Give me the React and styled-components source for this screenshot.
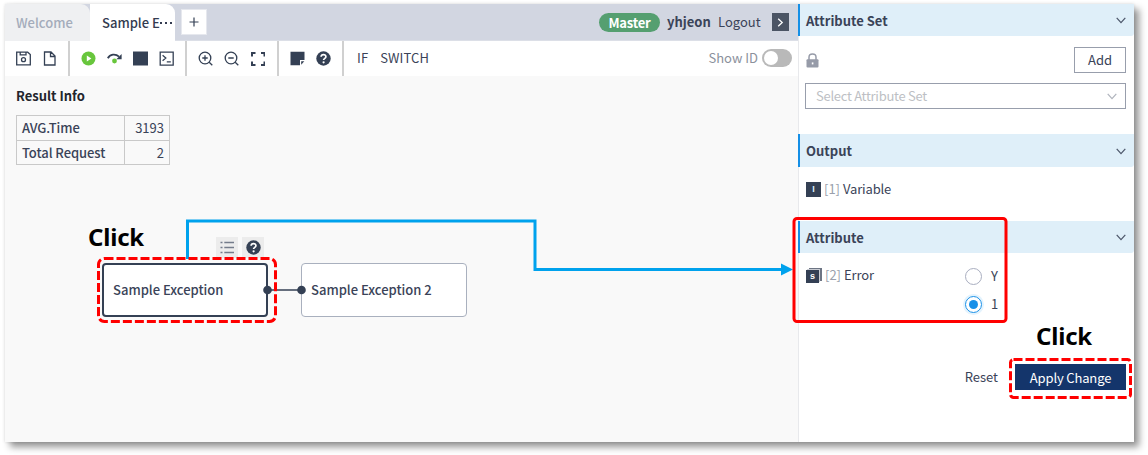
import React from "react";
import styled, { createGlobalStyle } from "styled-components";

const Global = createGlobalStyle`
  *, *::before, *::after { box-sizing: border-box; }
  body { margin: 0; background: #fff; overflow: hidden; }
`;

const Page = styled.div`
  position: relative;
  width: 1148px;
  height: 455px;
  padding: 4px 14px 13px 5px;
  font: 400 13px/20px "Noto Sans CJK KR", "Noto Sans", sans-serif;
  color: #3a4358;
`;
const Frame = styled.div`
  display: flex;
  width: 1129px;
  height: 438px;
  background: #fff;
  box-shadow: 5px 5px 7px rgba(0, 0, 0, 0.42), 0 0 3px rgba(0, 0, 0, 0.12);
`;
const Main = styled.main`
  display: flex;
  flex-direction: column;
  width: 793px;
`;
const TabBar = styled.header`
  display: flex;
  align-items: center;
  height: 37px;
  padding-right: 9px;
  background: #d2d6e1;
  border-bottom: 1px solid #dcdfe7;
`;
const Tab = styled.div`
  flex: none;
  width: 85px;
  height: 37px;
  padding-left: ${(p) => (p.$active ? 12 : 11)}px;
  line-height: 37px;
  font-weight: 500;
  white-space: nowrap;
  color: ${(p) => (p.$active ? "#333b50" : "#a4acbb")};
  background: ${(p) => (p.$active ? "#fff" : "#eff0f2")};
  border-radius: 0 9px 0 0;
  margin-bottom: -1px;
`;
const Dots = styled.span`
  display: inline-flex;
  gap: 3px;
  margin-left: 0;
  vertical-align: 4px;
  &::before, &::after, i {
    content: "";
    width: 2px;
    height: 2px;
    background: currentColor;
  }
`;
const NewTab = styled.div`
  display: grid;
  place-items: center;
  width: 26px;
  height: 26px;
  margin-left: 6px;
  background: #fff;
  border: 1px solid #e6e8ee;
`;
const Account = styled.div`
  display: flex;
  align-items: center;
  margin-left: auto;
`;
const RoleBadge = styled.span`
  width: 61px;
  height: 19px;
  margin-right: 7px;
  border-radius: 10px;
  background: #559f70;
  color: #fff;
  font-weight: 700;
  line-height: 19px;
  letter-spacing: -0.2px;
  text-align: center;
`;
const UserName = styled.span`
  width: 51px;
  font-weight: 700;
  white-space: nowrap;
`;
const Logout = styled.span`
  width: 54px;
  white-space: nowrap;
`;
const Collapse = styled.span`
  display: grid;
  place-items: center;
  width: 17px;
  height: 18px;
  background: #4b5464;
`;
const Toolbar = styled.div`
  display: flex;
  height: 35px;
  background: #fff;
`;
const ToolGroup = styled.div`
  display: flex;
  align-items: center;
  gap: 11px;
  width: ${(p) => p.$w}px;
  padding-left: 11px;
  border-right: 2px solid #d0d0d0;
`;
const Commands = styled.div`
  display: flex;
  align-items: center;
  gap: 12px;
  padding: 0 0 1px 13px;
  letter-spacing: 0.1px;
`;
const ShowId = styled.div`
  display: flex;
  align-items: center;
  gap: 4px;
  margin-left: auto;
  padding: 0 6px 1px 0;
  color: #8b919c;
`;
const Switch = styled.span`
  width: 30px;
  height: 18px;
  padding: 2px;
  border-radius: 9px;
  background: #b9b9b9;
  &::before {
    content: "";
    display: block;
    width: 14px;
    height: 14px;
    border-radius: 50%;
    background: #fff;
  }
`;
const Canvas = styled.section`
  position: relative;
  flex: 1;
  padding: 10px 11px;
  background: #f9f9f9;
`;
const Heading = styled.h2`
  margin: 0 0 9px;
  font-size: 13px;
  line-height: 20px;
  font-weight: 700;
  color: #22252c;
`;
const Results = styled.table`
  border-collapse: collapse;
  width: 154px;
  table-layout: fixed;
  td, th {
    height: 24.5px;
    padding: 1px 5px 0;
    border: 1px solid #c9c9c9;
    line-height: 22px;
  }
  th { width: 108px; text-align: left; font-weight: 500; white-space: nowrap; letter-spacing: -0.07px; }
  td { text-align: right; }
`;
const Node = styled.div`
  position: absolute;
  left: ${(p) => p.$x}px;
  top: ${(p) => p.$y}px;
  width: 166px;
  height: 54px;
  padding-left: 9px;
  border: ${(p) => (p.$selected ? "2px solid #344054" : "1px solid #a9b0be")};
  border-radius: 4px;
  background: #fff;
  font-weight: 500;
  line-height: ${(p) => (p.$selected ? 50 : 52)}px;
  white-space: nowrap;
`;
const NodeTools = styled.div`
  position: absolute;
  left: 211px;
  top: 161px;
  display: flex;
  gap: 4px;
`;
const NodeTool = styled.span`
  display: grid;
  place-items: center;
  width: 22px;
  height: 21px;
  background: #ececec;
`;
const Side = styled.aside`
  width: 336px;
  border-left: 1px solid #e8e9ec;
`;
const SectionHead = styled.div`
  display: flex;
  align-items: center;
  justify-content: space-between;
  height: ${(p) => p.$h || 32}px;
  margin-left: -1px;
  padding: 1px 8px 0 6px;
  border-left: 2px solid #158fe6;
  border-radius: 0 0 3px 0;
  background: #dfeff9;
  font-weight: 700;
`;
const SectionBody = styled.div`
  height: ${(p) => p.$h}px;
  padding: ${(p) => p.$pad || "11px 8px 0 6px"};
`;
const Row = styled.div`
  display: flex;
  align-items: ${(p) => p.$align || "center"};
  justify-content: ${(p) => p.$justify || "flex-start"};
`;
const AddButton = styled.button`
  width: 52px;
  height: 26px;
  padding: 0;
  border: 1px solid #989eac;
  background: #fff;
  color: inherit;
  font: inherit;
`;
const Select = styled.div`
  display: flex;
  align-items: center;
  justify-content: space-between;
  height: 26px;
  margin-top: 10px;
  padding: 0 8px 0 10px;
  border: 1px solid #989eac;
  color: #bdbfc4;
  letter-spacing: -0.28px;
`;
const TypeIcon = styled.span`
  display: block;
  width: 15px;
  height: 15px;
  background: #344054;
  color: #d9f0ff;
  font: 700 9px/15px "Liberation Sans", sans-serif;
  text-align: center;
`;
const StackedTypeIcon = styled(TypeIcon)`
  width: 13px;
  height: 13px;
  margin: 2px 3px 0 0;
  line-height: 12px;
  color: #fff;
  box-shadow: 1px -1px #c9ccd3, 3px -2px #6d7584;
`;
const Index = styled.span`
  margin: 0 3px 0 3px;
  color: #9a9fac;
`;
const FieldName = styled.span`
  letter-spacing: -0.15px;
`;
const Options = styled.div`
  display: grid;
  gap: 8px;
  width: 43px;
  margin: 1px 126px 0 auto;
`;
const Option = styled.label`
  display: flex;
  align-items: center;
  gap: 9px;
  height: 20px;
`;
const Radio = styled.span`
  display: grid;
  place-items: center;
  width: 17px;
  height: 17px;
  border: 1px solid ${(p) => (p.$on ? "#1890e8" : "#a9aec0")};
  border-radius: 50%;
  ${(p) => p.$on && "box-shadow: 0 0 0 2px #e4f3fd;"}
  &::before {
    content: "";
    width: 9px;
    height: 9px;
    border-radius: 50%;
    background: ${(p) => (p.$on ? "#1890e8" : "transparent")};
  }
`;
const Footer = styled.div`
  display: flex;
  align-items: center;
  justify-content: flex-end;
  gap: 17px;
  padding-right: 8px;
`;
const Apply = styled.button`
  width: 111px;
  height: 26px;
  padding: 1px 0 0;
  border: 0;
  background: #14356b;
  color: #fff;
  font: inherit;
  letter-spacing: -0.15px;
`;
const Overlay = styled.svg`
  position: absolute;
  inset: 0;
  pointer-events: none;
`;
const Callout = styled.span`
  position: absolute;
  left: ${(p) => p.$x}px;
  top: ${(p) => p.$y}px;
  color: #000;
  font: 700 24px/30px "Noto Sans", sans-serif;
  letter-spacing: -0.2px;
`;

const INK = "#344054";
const Icon = ({ w = 15, h = 15, children }) => (
  <svg width={w} height={h} viewBox={`0 0 ${w} ${h}`} fill="none" stroke={INK} strokeWidth="1.3">
    {children}
  </svg>
);
const SaveIcon = () => (
  <Icon>
    <path d="M.7 1.200h11l2.600 2.300V13.800H.7zM4.200 1.200v2.600h5.800V1.200" />
    <circle cx="7.500" cy="8.700" r="2" />
  </Icon>
);
const FileIcon = () => (
  <Icon>
    <path d="M2.500 1H9l4 4v9H2.500zM8.500 1v4.500H13" />
  </Icon>
);
const PlayIcon = () => (
  <Icon>
    <circle cx="7.500" cy="7.500" r="7" fill="#68c63c" stroke="none" />
    <path d="M5.800 4.600 10.400 7.500 5.800 10.400z" fill="#fff" stroke="none" />
  </Icon>
);
const StepIcon = () => (
  <Icon>
    <path d="M.8 7.200C3 3 8.500 2.500 12 5.600" strokeWidth="1.9" />
    <path d="M14.600 3v5.200H9.400z" fill={INK} stroke="none" />
    <circle cx="7.500" cy="10" r="2.400" fill="#68c63c" stroke="none" />
  </Icon>
);
const StopIcon = () => (
  <Icon>
    <path d="M0 .5h15v14H0z" fill={INK} stroke="none" />
  </Icon>
);
const TerminalIcon = () => (
  <Icon>
    <path d="M1.200 1.200h13v13h-13zM3.600 4.300 6.800 7l-3.200 2.700M7.800 10.800h4" />
  </Icon>
);
const ZoomIcon = ({ plus }) => (
  <Icon>
    <circle cx="7" cy="7" r="5.800" />
    <path d="M11.200 11.200 14.300 14.300M4.300 7h5.400" />
    {plus && <path d="M7 4.300v5.400" />}
  </Icon>
);
const ExpandIcon = () => (
  <Icon>
    <path d="M2 5.500V2H5.500M11 2h3.500V5.500M14.500 10.500V14H11M5.500 14H2v-3.500" strokeWidth="2" />
  </Icon>
);
const NoteIcon = () => (
  <Icon>
    <path d="M.5.8h14V9H10v5.300H.5z" fill={INK} stroke="none" />
    <path d="M11.200 10.300h3.100l-3.100 3.400z" fill={INK} stroke="none" />
  </Icon>
);
const HelpIcon = () => (
  <Icon>
    <circle cx="7.500" cy="7.500" r="7.200" fill={INK} stroke="none" />
    <path d="M5.100 5.800c.1-3 4.900-2.900 4.800-.1 0 1.700-2.300 1.700-2.300 3.400" stroke="#fff" strokeWidth="1.700" />
    <circle cx="7.600" cy="11.300" r="1.100" fill="#fff" stroke="none" />
  </Icon>
);
const ListIcon = () => (
  <Icon>
    <path d="M4.300 2.500h9.700M4.300 7.500h9.700M4.300 12.500h9.700" stroke="#747c8b" strokeWidth="1.600" />
    <path d="M.5 2.500h2M.5 7.500h2M.5 12.500h2" stroke="#747c8b" strokeWidth="1.600" />
  </Icon>
);
const Chevron = ({ color = "#4c566a" }) => (
  <Icon w={10} h={7}>
    <path d="M.7.8 5 5.700 9.300.8" stroke={color} strokeWidth="1.200" />
  </Icon>
);
const LockIcon = () => (
  <Icon w={14} h={15}>
    <path d="M4 7V4.200c0-4.200 7-4.200 7 0V7" stroke="#969ba8" strokeWidth="1.500" />
    <rect x="1.500" y="6.300" width="12" height="8.200" rx="1" fill="#969ba8" stroke="none" />
    <path d="M6.800 9.400h1.600v2H6.800z" fill="#fff" stroke="none" />
  </Icon>
);

export default function App() {
  return (
    <Page>
      <Global />
      <Frame>
        <Main>
          <TabBar>
            <Tab>Welcome</Tab>
            <Tab $active>Sample E<Dots><i /></Dots></Tab>
            <NewTab>
              <Icon w={10} h={10}>
                <path d="M5 .5v9M.5 5h9" strokeWidth="1.200" />
              </Icon>
            </NewTab>
            <Account>
              <RoleBadge>Master</RoleBadge>
              <UserName>yhjeon</UserName>
              <Logout>Logout</Logout>
              <Collapse>
                <Icon w={7} h={9}>
                  <path d="M1.200.8 5.200 4.500 1.200 8.200" stroke="#fff" />
                </Icon>
              </Collapse>
            </Account>
          </TabBar>
          <Toolbar>
            <ToolGroup $w={65}><SaveIcon /><FileIcon /></ToolGroup>
            <ToolGroup $w={117}><PlayIcon /><StepIcon /><StopIcon /><TerminalIcon /></ToolGroup>
            <ToolGroup $w={92}><ZoomIcon plus /><ZoomIcon /><ExpandIcon /></ToolGroup>
            <ToolGroup $w={65}><NoteIcon /><HelpIcon /></ToolGroup>
            <Commands><span>IF</span><span>SWITCH</span></Commands>
            <ShowId>Show ID<Switch /></ShowId>
          </Toolbar>
          <Canvas>
            <Heading>Result Info</Heading>
            <Results>
              <tbody>
                <tr><th>AVG.Time</th><td>3193</td></tr>
                <tr><th>Total Request</th><td>2</td></tr>
              </tbody>
            </Results>
            <NodeTools>
              <NodeTool><ListIcon /></NodeTool>
              <NodeTool><HelpIcon /></NodeTool>
            </NodeTools>
            <Node $x={97} $y={187} $selected>Sample Exception</Node>
            <Node $x={296} $y={187}>Sample Exception 2</Node>
          </Canvas>
        </Main>
        <Side>
          <SectionHead>Attribute Set<Chevron /></SectionHead>
          <SectionBody $h={98}>
            <Row $justify="space-between"><LockIcon /><AddButton>Add</AddButton></Row>
            <Select>Select Attribute Set<Chevron color="#b0b4bd" /></Select>
          </SectionBody>
          <SectionHead $h={33}>Output<Chevron /></SectionHead>
          <SectionBody $h={54} $pad="12px 8px 0 7px">
            <Row><TypeIcon>I</TypeIcon><Index>[1]</Index><FieldName>Variable</FieldName></Row>
          </SectionBody>
          <SectionHead>Attribute<Chevron /></SectionHead>
          <SectionBody $h={111} $pad="12px 0 0 7px">
            <Row $align="flex-start">
              <Row><StackedTypeIcon>s</StackedTypeIcon><Index>[2]</Index><FieldName>Error</FieldName></Row>
              <Options>
                <Option><Radio />Y</Option>
                <Option><Radio $on />1</Option>
              </Options>
            </Row>
          </SectionBody>
          <Footer>Reset<Apply>Apply Change</Apply></Footer>
        </Side>
      </Frame>
      <Overlay width="1148" height="455" fill="none">
        <path d="M267 290h34" stroke={INK} strokeWidth="1.300" />
        <circle cx="267.500" cy="290" r="4.300" fill={INK} />
        <circle cx="301.500" cy="290" r="4.300" fill={INK} />
        <path d="M187.500 259V221H535v48.500h247" stroke="#00a2ed" strokeWidth="3" />
        <path d="M781 263.500 793 269.500 781 275.500z" fill="#00a2ed" />
        <rect x="98.500" y="258.500" width="177" height="63" rx="6" stroke="#ff0000" strokeWidth="3" strokeDasharray="9 3" />
        <rect x="794" y="218.500" width="212" height="103" rx="3" stroke="#ff0000" strokeWidth="3" />
        <rect x="1010.500" y="359.500" width="120" height="38" rx="3" stroke="#ff0000" strokeWidth="3" strokeDasharray="9 3" />
      </Overlay>
      <Callout $x={88} $y={222}>Click</Callout>
      <Callout $x={1036} $y={321}>Click</Callout>
    </Page>
  );
}
